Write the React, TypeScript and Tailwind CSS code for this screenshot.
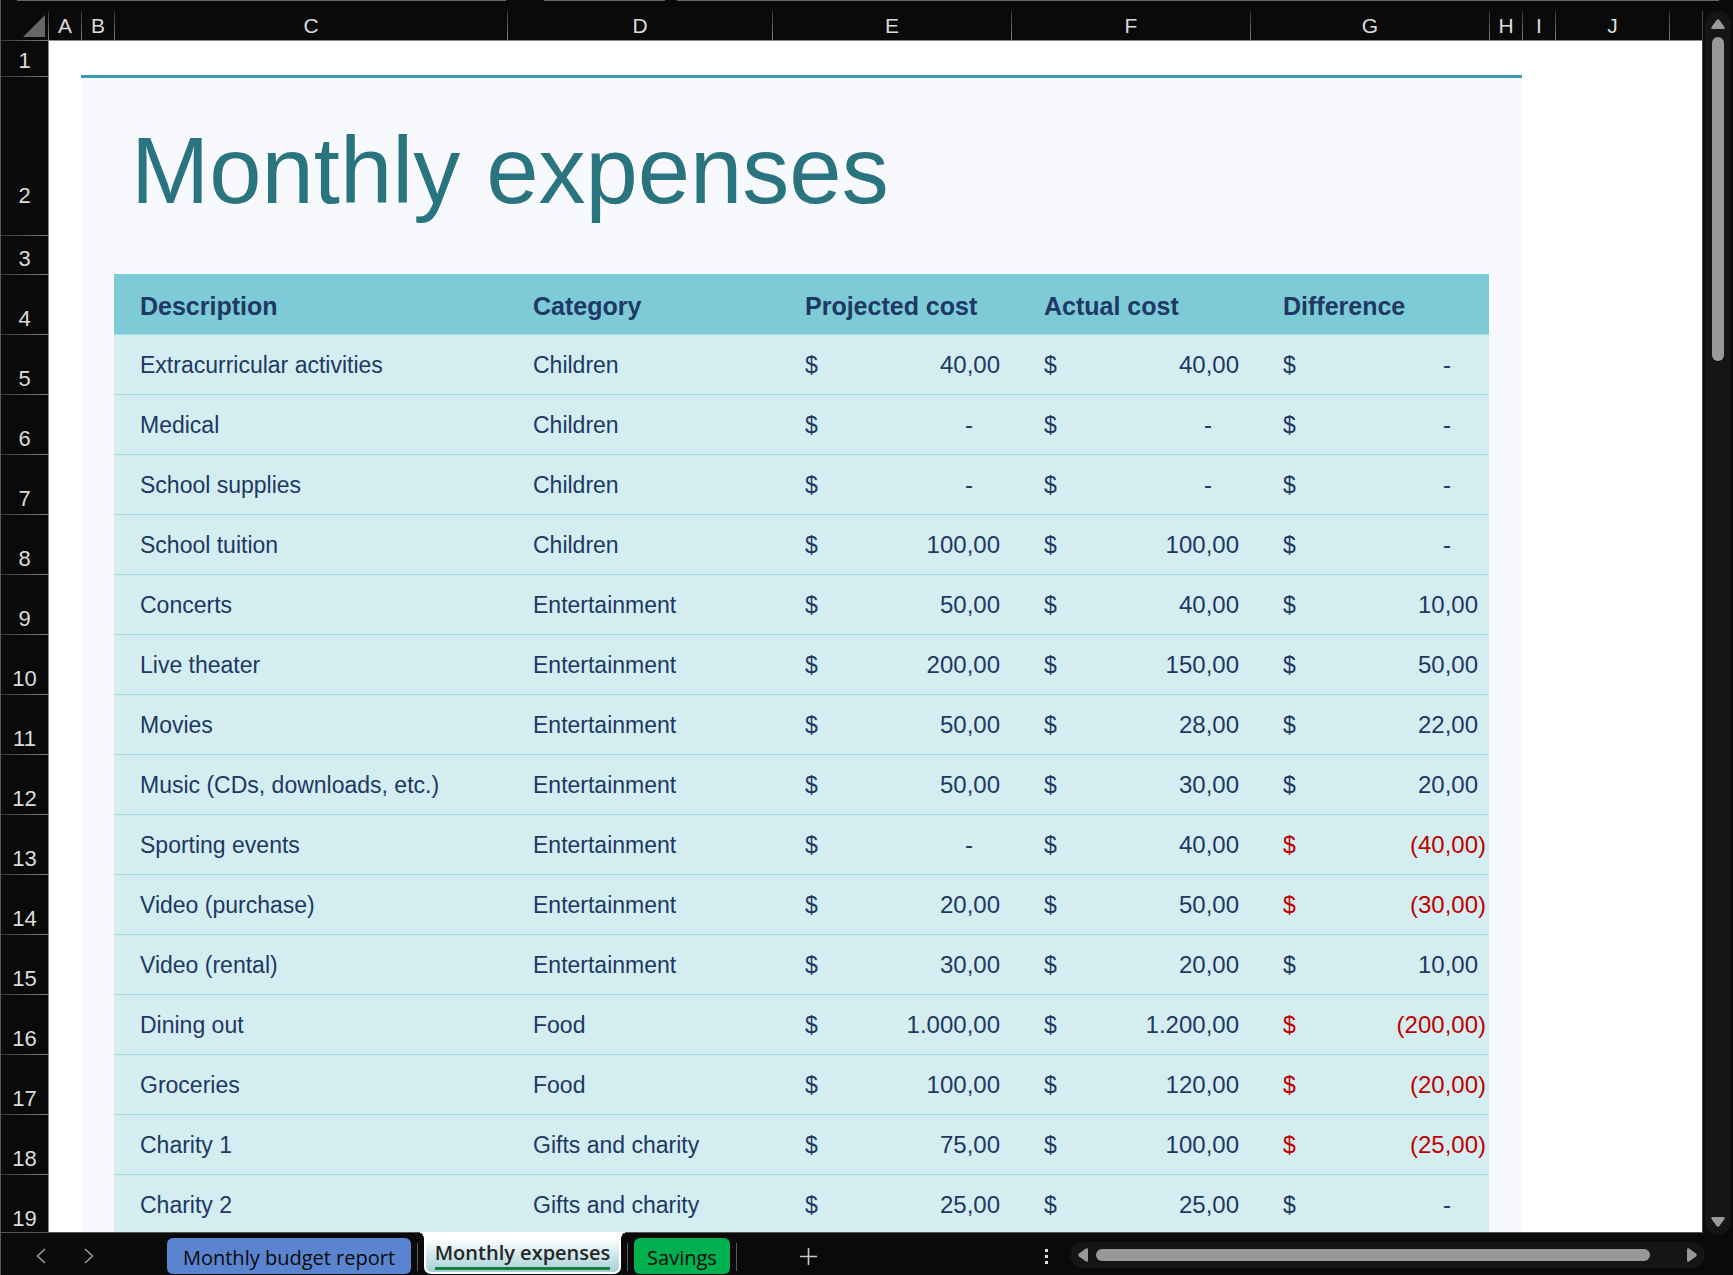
import React from "react";

type Row = [string, string, string, string, string];

const rows: Row[] = [
  ["Extracurricular activities", "Children", "40,00", "40,00", "-"],
  ["Medical", "Children", "-", "-", "-"],
  ["School supplies", "Children", "-", "-", "-"],
  ["School tuition", "Children", "100,00", "100,00", "-"],
  ["Concerts", "Entertainment", "50,00", "40,00", "10,00"],
  ["Live theater", "Entertainment", "200,00", "150,00", "50,00"],
  ["Movies", "Entertainment", "50,00", "28,00", "22,00"],
  ["Music (CDs, downloads, etc.)", "Entertainment", "50,00", "30,00", "20,00"],
  ["Sporting events", "Entertainment", "-", "40,00", "(40,00)"],
  ["Video (purchase)", "Entertainment", "20,00", "50,00", "(30,00)"],
  ["Video (rental)", "Entertainment", "30,00", "20,00", "10,00"],
  ["Dining out", "Food", "1.000,00", "1.200,00", "(200,00)"],
  ["Groceries", "Food", "100,00", "120,00", "(20,00)"],
  ["Charity 1", "Gifts and charity", "75,00", "100,00", "(25,00)"],
  ["Charity 2", "Gifts and charity", "25,00", "25,00", "-"],
];

const columns = ["A", "B", "C", "D", "E", "F", "G", "H", "I", "J"];

function ColumnHead({ label }: { label?: string }) {
  return (
    <th
      scope="col"
      className="h-[29px] bg-[#0a0a0a] bg-[linear-gradient(to_bottom,#333,#808080)] bg-[length:1px_100%] bg-no-repeat py-0 pr-0 pl-px text-center align-middle text-[21px] leading-6 font-normal text-[#dcdcdc]"
    >
      {label}
    </th>
  );
}

function RowHead({ n, className = "pb-1" }: { n: number; className?: string }) {
  return (
    <th
      scope="row"
      className={`bg-[#0a0a0a] bg-[linear-gradient(to_right,#333,#808080)] bg-[length:100%_1px] bg-no-repeat px-0 pt-0 text-center align-bottom text-[22px] leading-[22px] font-normal text-[#dcdcdc] ${className}`}
    >
      {n}
    </th>
  );
}

function Gutter() {
  return <td className="border-l border-[#8a8a8a] p-0" />;
}

function Panel() {
  return <td className="bg-[#f8f9fd] p-0" />;
}

function Blank() {
  return (
    <>
      <td className="p-0" />
      <td className="p-0" />
      <td className="p-0" />
    </>
  );
}

function Money({ value }: { value: string }) {
  const negative = value.startsWith("(");
  const pad = negative ? "pr-[3px]" : value === "-" ? "pr-[38px]" : "pr-[11px]";
  return (
    <td
      className={`border-t border-[#a2dbe1] bg-[#d3edf0] py-0 pl-[33px] text-2xl leading-7 ${pad} ${
        negative ? "text-[#c00000]" : "text-[#203864]"
      }`}
    >
      <div className="flex justify-between">
        <span className="text-[23px]">$</span>
        <span>{value}</span>
      </div>
    </td>
  );
}

function TextCell({ value }: { value: string }) {
  return (
    <td className="border-t border-[#a2dbe1] bg-[#d3edf0] py-0 pr-0 pl-[26px] text-[23px] leading-7 whitespace-nowrap text-[#203864]">
      {value}
    </td>
  );
}

function TableHead({ label, className }: { label: string; className: string }) {
  return (
    <th
      scope="col"
      className={`bg-[#7dcbd6] pt-1 pr-0 pb-0 text-left text-[25px] leading-7 font-bold whitespace-nowrap text-[#203864] ${className}`}
    >
      {label}
    </th>
  );
}

function Arrow({ className }: { className: string }) {
  return (
    <svg viewBox="0 0 14 10" className={`h-[10px] w-[14px] fill-[#999] ${className}`} aria-hidden="true">
      <path d="M5.6 1C6.3 0 7.7 0 8.4 1L13.5 8C14 9 13.6 10 12.5 10H1.5C.4 10 0 9 .5 8Z" />
    </svg>
  );
}

function Divider() {
  return <span className="mt-[10px] h-7 w-px shrink-0 bg-[#5c5c5c]" />;
}

export default function App() {
  return (
    <div className="flex h-screen flex-col overflow-hidden border-l border-[#555] bg-[#0a0a0a] font-['Liberation_Sans',Arial,sans-serif]">
      <div className="flex min-h-0 flex-1">
        <div className="flex min-w-0 flex-1 flex-col">
          <div className="-mr-4 flex h-[11px] shrink-0 pl-4">
            <span className="h-px w-[489px] shrink-0 bg-[#666]" />
            <span className="ml-[38px] h-px w-[121px] shrink-0 bg-[#666]" />
            <span className="ml-[12px] h-px flex-1 bg-[#666]" />
          </div>
          <div className="min-h-0 flex-1 overflow-hidden border-r border-[#444] bg-white">
            <table className="w-full table-fixed border-separate border-spacing-0">
              <colgroup>
                <col className="w-[47px]" />
                <col className="w-[33px]" />
                <col className="w-[33px]" />
                <col className="w-[393px]" />
                <col className="w-[265px]" />
                <col className="w-[239px]" />
                <col className="w-[239px]" />
                <col className="w-[239px]" />
                <col className="w-[33px]" />
                <col className="w-[33px]" />
                <col className="w-[114px]" />
                <col />
              </colgroup>
              <thead>
                <tr>
                  <th className="bg-[#0a0a0a] p-0 align-top">
                    <button aria-label="Select all" className="mt-1 mr-[3px] ml-auto block">
                      <svg viewBox="0 0 22 22" className="size-[22px] fill-[#666]">
                        <path d="M22 0V22H0Z" />
                      </svg>
                    </button>
                  </th>
                  {columns.map((c) => (
                    <ColumnHead key={c} label={c} />
                  ))}
                  <ColumnHead />
                </tr>
              </thead>
              <tbody>
                <tr className="h-9">
                  <RowHead n={1} className="pb-1" />
                  <td className="border-t border-l border-[#8a8a8a] p-0" />
                  <td colSpan={7} className="border-t border-b border-t-[#8a8a8a] border-b-[#3c9caf] p-0" />
                  <td className="border-t border-[#8a8a8a] p-0" />
                  <td className="border-t border-[#8a8a8a] p-0" />
                  <td className="border-t border-[#8a8a8a] p-0" />
                </tr>
                <tr className="h-[159px]">
                  <RowHead n={2} className="pb-7" />
                  <Gutter />
                  <td className="border-t-2 border-[#3c9caf] bg-[#f8f9fd] p-0" />
                  <td
                    colSpan={6}
                    className="border-t-2 border-[#3c9caf] bg-[#f8f9fd] pt-7 pr-0 pb-0 pl-[17px] align-middle whitespace-nowrap"
                  >
                    <h1 className="text-[94px] leading-[96px] text-[#29747f]">Monthly expenses</h1>
                  </td>
                  <Blank />
                </tr>
                <tr className="h-[39px]">
                  <RowHead n={3} />
                  <Gutter />
                  <td colSpan={7} className="bg-[#f8f9fd] p-0" />
                  <Blank />
                </tr>
                <tr className="h-[60px]">
                  <RowHead n={4} />
                  <Gutter />
                  <Panel />
                  <TableHead label="Description" className="pl-[26px]" />
                  <TableHead label="Category" className="pl-[26px]" />
                  <TableHead label="Projected cost" className="pl-[33px]" />
                  <TableHead label="Actual cost" className="pl-[33px]" />
                  <TableHead label="Difference" className="pl-[33px]" />
                  <Panel />
                  <Blank />
                </tr>
                {rows.map((r, i) => (
                  <tr key={r[0]} className="h-[60px]">
                    <RowHead n={i + 5} />
                    <Gutter />
                    <Panel />
                    <TextCell value={r[0]} />
                    <TextCell value={r[1]} />
                    <Money value={r[2]} />
                    <Money value={r[3]} />
                    <Money value={r[4]} />
                    <Panel />
                    <Blank />
                  </tr>
                ))}
              </tbody>
            </table>
          </div>
        </div>
        <div className="z-10 mt-[11px] mr-[2px] -mb-[3px] ml-[2px] flex w-[26px] shrink-0 flex-col items-center rounded-[13px] bg-[#151515] py-2">
          <button aria-label="Scroll up">
            <Arrow className="block" />
          </button>
          <div className="mt-2 flex w-3 flex-1 flex-col">
            <div className="h-[324px] rounded-full bg-[#999]" />
          </div>
          <button aria-label="Scroll down">
            <Arrow className="block rotate-180" />
          </button>
        </div>
      </div>

      <div className="flex h-[43px] shrink-0">
        <div className="flex min-w-0 flex-1 border-t border-[#555]">
          <button aria-label="Previous sheet" className="ml-[30px] flex w-5 items-center justify-center pt-2 pb-1">
            <svg viewBox="0 0 10 16" className="h-4 w-[10px] fill-none stroke-[#999] stroke-[1.6]">
              <path d="M9 1L1.5 8L9 15" />
            </svg>
          </button>
          <button aria-label="Next sheet" className="ml-7 flex w-5 items-center justify-center pt-2 pb-1">
            <svg viewBox="0 0 10 16" className="h-4 w-[10px] fill-none stroke-[#999] stroke-[1.6]">
              <path d="M1 1L8.5 8L1 15" />
            </svg>
          </button>
          <div role="tablist" className="ml-[68px] flex font-['Open_Sans',sans-serif] text-xl">
            <button
              role="tab"
              aria-selected="false"
              className="mt-[5px] h-9 w-[244px] rounded-[6px] bg-[#5b84d0] pt-1 leading-8 whitespace-nowrap text-[#0a0a0a]"
            >
              Monthly budget report
            </button>
            <span className="flex w-[13px] justify-center">
              <Divider />
            </span>
            <button
              role="tab"
              aria-selected="true"
              className="relative -mt-px flex h-[42px] w-[197px] flex-col items-center rounded-b-[7px] border-x-2 border-b-2 border-white bg-linear-to-b from-white from-15% to-[#a3d0d6] pt-[6px] font-semibold whitespace-nowrap text-[#262626] before:absolute before:top-0 before:-left-2 before:size-[6px] before:bg-[radial-gradient(circle_at_0_100%,#0a0a0a_5px,#555_5px,#555_6px,#fff_6px)] after:absolute after:top-0 after:-right-2 after:size-[6px] after:bg-[radial-gradient(circle_at_100%_100%,#0a0a0a_5px,#555_5px,#555_6px,#fff_6px)]"
            >
              <span className="border-b-[3px] border-[#17803d] leading-[29px]">Monthly expenses</span>
            </button>
            <span className="flex w-[13px] justify-center">
              <Divider />
            </span>
            <button
              role="tab"
              aria-selected="false"
              className="mt-[5px] h-9 w-24 rounded-[6px] bg-[#00b050] pt-1 leading-8 text-[#0a0a0a]"
            >
              Savings
            </button>
            <span className="flex w-[13px] justify-center">
              <Divider />
            </span>
          </div>
          <button aria-label="New sheet" className="ml-[55px] flex w-5 items-center justify-center pt-2 pb-1">
            <svg viewBox="0 0 17 17" className="size-[17px] fill-none stroke-[#c8c8c8] stroke-[1.6]">
              <path d="M8.5 0V17M0 8.5H17" />
            </svg>
          </button>
          <button aria-label="Resize tab bar" className="mr-[21px] ml-auto flex w-[6px] flex-col items-center gap-[3px] pt-4">
            <span className="size-[3px] bg-[#ddd]" />
            <span className="size-[3px] bg-[#ddd]" />
            <span className="size-[3px] bg-[#ddd]" />
          </button>
          <div className="-mr-[2px] mt-[9px] flex h-[26px] w-[635px] items-center rounded-[13px] bg-[#151515] px-[6px]">
            <button aria-label="Scroll left">
              <Arrow className="block -rotate-90" />
            </button>
            <div className="mr-[35px] ml-[6px] h-3 flex-1 rounded-full bg-[#999]" />
            <button aria-label="Scroll right">
              <Arrow className="block rotate-90" />
            </button>
          </div>
        </div>
        <div className="w-[30px] shrink-0" />
      </div>
    </div>
  );
}
